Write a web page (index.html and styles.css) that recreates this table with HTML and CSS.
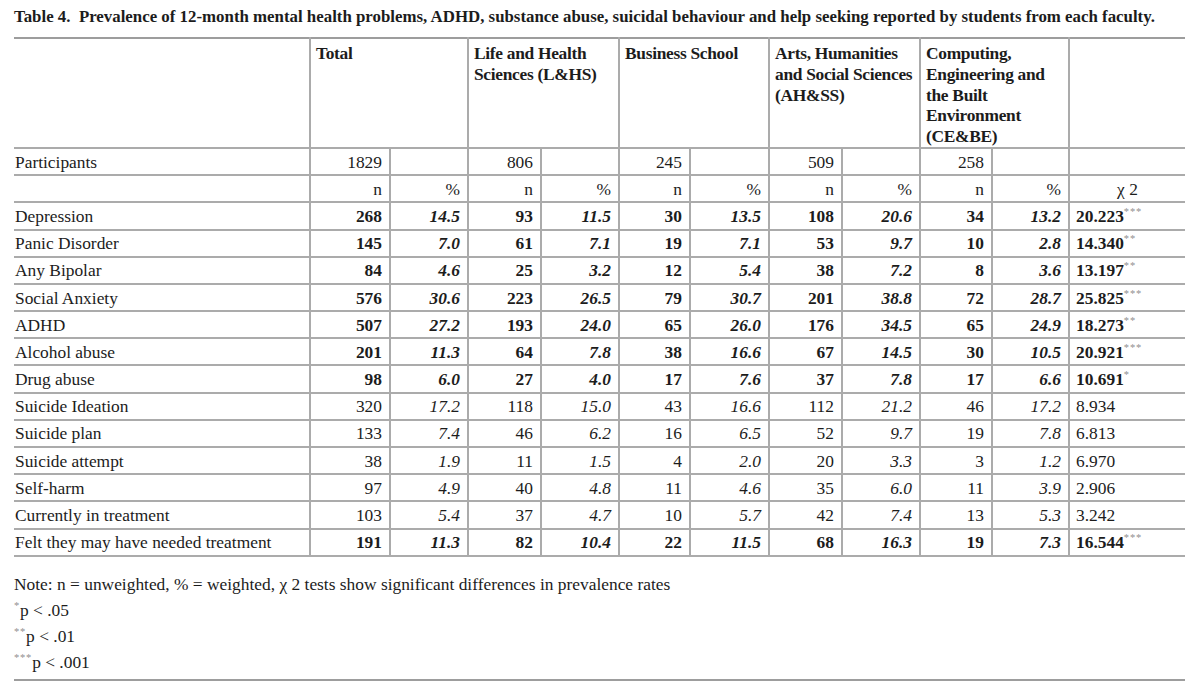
FILE: index.html
```html
<!DOCTYPE html>
<html lang="en">
<head>
<meta charset="utf-8">
<title>Table 4</title>
<link rel="stylesheet" href="styles.css">
</head>
<body>
<div class="page">
  <h1 class="caption">Table 4.&nbsp; Prevalence of 12-month mental health problems, ADHD, substance abuse, suicidal behaviour and help seeking reported by students from each faculty.</h1>
  <table class="data">
    <colgroup>
      <col class="c-label"><col class="c-n1"><col class="c-p1"><col class="c-n2"><col class="c-p2"><col class="c-n3"><col class="c-p3"><col class="c-n4"><col class="c-p4"><col class="c-n5"><col class="c-p5"><col class="c-chi">
    </colgroup>
    <thead>
      <tr class="head">
        <th class="label"></th>
        <th colspan="2">Total</th>
        <th colspan="2">Life and Health Sciences (L&amp;HS)</th>
        <th colspan="2">Business School</th>
        <th colspan="2">Arts, Humanities and Social Sciences (AH&amp;SS)</th>
        <th colspan="2">Computing, Engineering and the Built Environment (CE&amp;BE)</th>
        <th></th>
      </tr>
    </thead>
    <tbody>
      <tr class="row">
        <td class="label">Participants</td>
        <td class="num">1829</td><td></td>
        <td class="num">806</td><td></td>
        <td class="num">245</td><td></td>
        <td class="num">509</td><td></td>
        <td class="num">258</td><td></td>
        <td></td>
      </tr>
      <tr class="row sub">
        <td class="label"></td>
        <td class="num">n</td><td class="num">%</td>
        <td class="num">n</td><td class="num">%</td>
        <td class="num">n</td><td class="num">%</td>
        <td class="num">n</td><td class="num">%</td>
        <td class="num">n</td><td class="num">%</td>
        <td class="chi center">χ 2</td>
      </tr>
      <tr class="row sig">
        <td class="label">Depression</td>
        <td class="num">268</td><td class="num pct">14.5</td>
        <td class="num">93</td><td class="num pct">11.5</td>
        <td class="num">30</td><td class="num pct">13.5</td>
        <td class="num">108</td><td class="num pct">20.6</td>
        <td class="num">34</td><td class="num pct">13.2</td>
        <td class="chi">20.223<sup class="star">***</sup></td>
      </tr>
      <tr class="row sig">
        <td class="label">Panic Disorder</td>
        <td class="num">145</td><td class="num pct">7.0</td>
        <td class="num">61</td><td class="num pct">7.1</td>
        <td class="num">19</td><td class="num pct">7.1</td>
        <td class="num">53</td><td class="num pct">9.7</td>
        <td class="num">10</td><td class="num pct">2.8</td>
        <td class="chi">14.340<sup class="star">**</sup></td>
      </tr>
      <tr class="row sig">
        <td class="label">Any Bipolar</td>
        <td class="num">84</td><td class="num pct">4.6</td>
        <td class="num">25</td><td class="num pct">3.2</td>
        <td class="num">12</td><td class="num pct">5.4</td>
        <td class="num">38</td><td class="num pct">7.2</td>
        <td class="num">8</td><td class="num pct">3.6</td>
        <td class="chi">13.197<sup class="star">**</sup></td>
      </tr>
      <tr class="row sig">
        <td class="label">Social Anxiety</td>
        <td class="num">576</td><td class="num pct">30.6</td>
        <td class="num">223</td><td class="num pct">26.5</td>
        <td class="num">79</td><td class="num pct">30.7</td>
        <td class="num">201</td><td class="num pct">38.8</td>
        <td class="num">72</td><td class="num pct">28.7</td>
        <td class="chi">25.825<sup class="star">***</sup></td>
      </tr>
      <tr class="row sig">
        <td class="label">ADHD</td>
        <td class="num">507</td><td class="num pct">27.2</td>
        <td class="num">193</td><td class="num pct">24.0</td>
        <td class="num">65</td><td class="num pct">26.0</td>
        <td class="num">176</td><td class="num pct">34.5</td>
        <td class="num">65</td><td class="num pct">24.9</td>
        <td class="chi">18.273<sup class="star">**</sup></td>
      </tr>
      <tr class="row sig">
        <td class="label">Alcohol abuse</td>
        <td class="num">201</td><td class="num pct">11.3</td>
        <td class="num">64</td><td class="num pct">7.8</td>
        <td class="num">38</td><td class="num pct">16.6</td>
        <td class="num">67</td><td class="num pct">14.5</td>
        <td class="num">30</td><td class="num pct">10.5</td>
        <td class="chi">20.921<sup class="star">***</sup></td>
      </tr>
      <tr class="row sig">
        <td class="label">Drug abuse</td>
        <td class="num">98</td><td class="num pct">6.0</td>
        <td class="num">27</td><td class="num pct">4.0</td>
        <td class="num">17</td><td class="num pct">7.6</td>
        <td class="num">37</td><td class="num pct">7.8</td>
        <td class="num">17</td><td class="num pct">6.6</td>
        <td class="chi">10.691<sup class="star">*</sup></td>
      </tr>
      <tr class="row">
        <td class="label">Suicide Ideation</td>
        <td class="num">320</td><td class="num pct">17.2</td>
        <td class="num">118</td><td class="num pct">15.0</td>
        <td class="num">43</td><td class="num pct">16.6</td>
        <td class="num">112</td><td class="num pct">21.2</td>
        <td class="num">46</td><td class="num pct">17.2</td>
        <td class="chi">8.934</td>
      </tr>
      <tr class="row">
        <td class="label">Suicide plan</td>
        <td class="num">133</td><td class="num pct">7.4</td>
        <td class="num">46</td><td class="num pct">6.2</td>
        <td class="num">16</td><td class="num pct">6.5</td>
        <td class="num">52</td><td class="num pct">9.7</td>
        <td class="num">19</td><td class="num pct">7.8</td>
        <td class="chi">6.813</td>
      </tr>
      <tr class="row">
        <td class="label">Suicide attempt</td>
        <td class="num">38</td><td class="num pct">1.9</td>
        <td class="num">11</td><td class="num pct">1.5</td>
        <td class="num">4</td><td class="num pct">2.0</td>
        <td class="num">20</td><td class="num pct">3.3</td>
        <td class="num">3</td><td class="num pct">1.2</td>
        <td class="chi">6.970</td>
      </tr>
      <tr class="row">
        <td class="label">Self-harm</td>
        <td class="num">97</td><td class="num pct">4.9</td>
        <td class="num">40</td><td class="num pct">4.8</td>
        <td class="num">11</td><td class="num pct">4.6</td>
        <td class="num">35</td><td class="num pct">6.0</td>
        <td class="num">11</td><td class="num pct">3.9</td>
        <td class="chi">2.906</td>
      </tr>
      <tr class="row">
        <td class="label">Currently in treatment</td>
        <td class="num">103</td><td class="num pct">5.4</td>
        <td class="num">37</td><td class="num pct">4.7</td>
        <td class="num">10</td><td class="num pct">5.7</td>
        <td class="num">42</td><td class="num pct">7.4</td>
        <td class="num">13</td><td class="num pct">5.3</td>
        <td class="chi">3.242</td>
      </tr>
      <tr class="row sig">
        <td class="label">Felt they may have needed treatment</td>
        <td class="num">191</td><td class="num pct">11.3</td>
        <td class="num">82</td><td class="num pct">10.4</td>
        <td class="num">22</td><td class="num pct">11.5</td>
        <td class="num">68</td><td class="num pct">16.3</td>
        <td class="num">19</td><td class="num pct">7.3</td>
        <td class="chi">16.544<sup class="star">***</sup></td>
      </tr>
    </tbody>
  </table>
  <div class="notes">
    <p>Note: n = unweighted, % = weighted, χ 2 tests show significant differences in prevalence rates</p>
    <p><sup class="star">*</sup>p &lt; .05</p>
    <p><sup class="star">**</sup>p &lt; .01</p>
    <p><sup class="star">***</sup>p &lt; .001</p>
  </div>
</div>
</body>
</html>
```
FILE: styles.css
```css
html, body {
  margin: 0;
  padding: 0;
  background: #ffffff;
}

.page {
  width: 1171px;
  padding: 7px 0 0 14px;
  font-family: "Liberation Serif", "Times New Roman", serif;
  color: #1c1c1c;
}

.caption {
  margin: 0;
  font-size: 16.85px;
  line-height: 20px;
  font-weight: bold;
  white-space: nowrap;
}

.data {
  margin-top: 10px;
  width: 1171px;
  table-layout: fixed;
  border-collapse: collapse;
  font-size: 17.4px;
  border-top: 2px solid #9d9d9d;
}

.c-label { width: 296px; }
.c-n1 { width: 80px; }
.c-p1 { width: 78px; }
.c-n2 { width: 73px; }
.c-p2 { width: 78px; }
.c-n3 { width: 71px; }
.c-p3 { width: 79px; }
.c-n4 { width: 73px; }
.c-p4 { width: 78px; }
.c-n5 { width: 72px; }
.c-p5 { width: 77px; }
.c-chi { width: 116px; }

.data th,
.data td {
  padding: 0;
  border-left: 2px solid #ababab;
  border-bottom: 2px solid #ababab;
}

.data .label {
  border-left: none;
  padding-left: 1px;
  text-align: left;
  font-weight: normal;
}

.head th {
  height: 102px;
  vertical-align: top;
  text-align: left;
  font-weight: bold;
  line-height: 20.8px;
  letter-spacing: -0.3px;
  padding: 4px 0 0 5px;
}

.row td {
  height: 25.2px;
  line-height: 20px;
  vertical-align: middle;
  white-space: nowrap;
}

.num {
  text-align: right;
  padding-right: 7px !important;
}

.pct {
  font-style: italic;
}

.sig td {
  font-weight: bold;
}

.sig td.label {
  font-weight: normal;
}

.chi {
  padding-left: 6px !important;
  text-align: left;
}

.chi.center {
  text-align: center;
  padding-left: 0 !important;
}

.star {
  font-size: 10.5px;
  font-weight: normal;
  color: #8f8f8f;
  vertical-align: 7px;
  line-height: 0;
  letter-spacing: 0.8px;
}

.notes {
  margin-top: 14px;
  width: 1171px;
  border-bottom: 2px solid #9d9d9d;
  padding-bottom: 4px;
  font-size: 17.4px;
}

.notes p {
  margin: 0;
  line-height: 26px;
}
```
